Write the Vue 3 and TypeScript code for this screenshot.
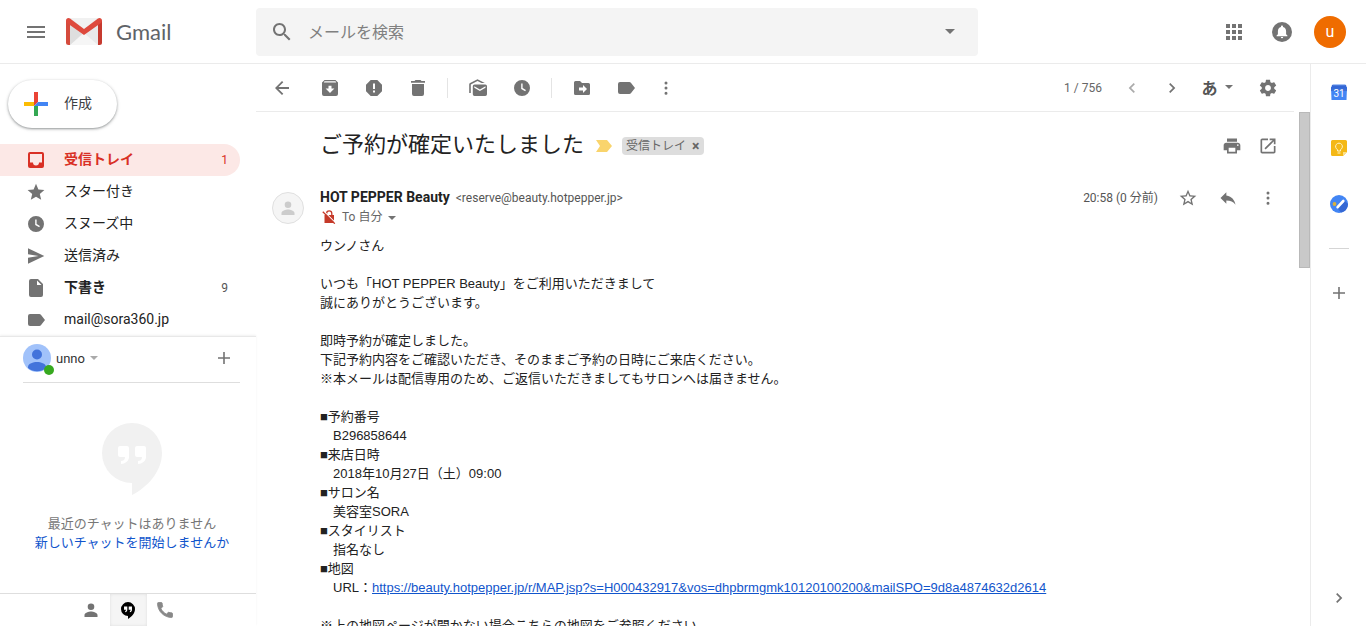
<script setup lang="ts">
import { ref } from 'vue'

interface Folder {
  id: string
  label: string
  icon: string
  count?: number
  bold?: boolean
}

const icons: Record<string, string> = {
  inbox: 'M4 2h12a2 2 0 0 1 2 2v12a2 2 0 0 1-2 2H4a2 2 0 0 1-2-2V4a2 2 0 0 1 2-2zM4 4v8.500h3a3 3 0 0 0 6 0h3V4z',
  star: 'M10 1.800l2.400 5.700 6 .5-4.600 3.900 1.400 5.900L10 14.700l-5.200 3.100 1.400-5.900L1.600 8l6-.5z',
  clock: 'M10 2a8 8 0 1 1 0 16 8 8 0 0 1 0-16zM9.200 5.500v5.400l4 2.400.7-1.200-3.300-2V5.500z',
  send: 'M2 2.300l16.300 7.700L2 17.700v-6L12.500 10 2 8.300z',
  file: 'M5 1h7l5 5v11a2 2 0 0 1-2 2H5a2 2 0 0 1-2-2V3a2 2 0 0 1 2-2zM11 2.500V7h4.500z',
  label: 'M4 4h9.300a2 2 0 0 1 1.600.8L19 10l-4.100 5.200a2 2 0 0 1-1.600.8H4a2 2 0 0 1-2-2V6a2 2 0 0 1 2-2z',
  back: 'M17 9.100H6.500l4.800-4.800L10 3l-7 7 7 7 1.300-1.300-4.800-4.800H17z',
  archive: 'M4.500 2h11L18 4.500V16a2 2 0 0 1-2 2H4a2 2 0 0 1-2-2V4.500zM4.500 3.300L3.800 4.500h12.400l-.7-1.200zM8.500 7.800v2.700H5.600L10 14.900l4.400-4.400h-2.900V7.800z',
  report: 'M6.700 2h6.600L18 6.700v6.600L13.300 18H6.700L2 13.300V6.700zM9 5.500V11h2V5.500zM9 12.500v2h2v-2z',
  trash: 'M7.500 2h5l1 1H17v1.800H3V3h3.500zM4 6h12v10a2 2 0 0 1-2 2H6a2 2 0 0 1-2-2z',
  unread: 'M6.500 6.500h10.800A1.700 1.700 0 0 1 19 8.200v8.100a1.700 1.700 0 0 1-1.700 1.700H6.500a1.700 1.700 0 0 1-1.700-1.700V8.200a1.700 1.700 0 0 1 1.700-1.700zM6.300 8.200v1.500l5.600 3.300 5.600-3.300V8.200l-5.600 3.200zM1.200 15V6.500c0-.7.3-1.200.9-1.500L9.500 1.300 16.800 5h-3.300l-4-2.100-6.700 3.500V15z',
  move: 'M3.500 3H8l2 2h6.500A1.500 1.500 0 0 1 18 6.500v9a1.500 1.500 0 0 1-1.500 1.500h-13A1.500 1.500 0 0 1 2 15.500v-11A1.500 1.500 0 0 1 3.500 3zM7 9.500v3h4V15l4-4-4-4v2.500z',
  more: 'M10 3.500a1.500 1.500 0 1 1 0 3 1.500 1.500 0 0 1 0-3zM10 8.600a1.500 1.500 0 1 1 0 3 1.500 1.500 0 0 1 0-3zM10 13.700a1.500 1.500 0 1 1 0 3 1.500 1.500 0 0 1 0-3z',
  prev: 'M11.700 5l1.200 1.200L9.100 10l3.800 3.800-1.200 1.200-5-5z',
  next: 'M8.300 5L7.100 6.200l3.800 3.800-3.800 3.800L8.300 15l5-5z',
  plus: 'M9.200 4h1.600v5.200H16v1.600h-5.200V16H9.200v-5.200H4V9.200h5.200z',
  person: 'M10 3.500a3.300 3.300 0 1 1 0 6.600 3.300 3.300 0 0 1 0-6.600zM3.500 17v-2c0-2.300 4.300-3.500 6.500-3.500s6.500 1.200 6.500 3.500v2z',
}

const icons24: Record<string, string> = {
  menu: 'M3 18h18v-2H3v2zm0-5h18v-2H3v2zm0-7v2h18V6H3z',
  search: 'M15.500 14h-.79l-.28-.27C15.410 12.590 16 11.110 16 9.500 16 5.910 13.090 3 9.500 3S3 5.910 3 9.500 5.910 16 9.500 16c1.610 0 3.090-.59 4.230-1.570l.27.28v.79l5 4.990L20.490 19l-4.990-5zm-6 0C7.010 14 5 11.990 5 9.500S7.010 5 9.500 5 14 7.010 14 9.500 11.990 14 9.500 14z',
  apps: 'M4 8h4V4H4v4zm6 12h4v-4h-4v4zm-6 0h4v-4H4v4zm0-6h4v-4H4v4zm6 0h4v-4h-4v4zm6-10v4h4V4h-4zm-6 4h4V4h-4v4zm6 6h4v-4h-4v4zm0 6h4v-4h-4v4z',
  gear: 'M19.430 12.980c.04-.32.07-.64.07-.98s-.03-.66-.07-.98l2.110-1.650c.19-.15.24-.42.12-.64l-2-3.460c-.12-.22-.39-.3-.61-.22l-2.490 1c-.52-.4-1.080-.73-1.690-.98l-.38-2.650C14.460 2.180 14.250 2 14 2h-4c-.25 0-.46.18-.49.42l-.38 2.650c-.61.25-1.170.59-1.690.98l-2.490-1c-.23-.09-.49 0-.61.22l-2 3.460c-.13.22-.07.49.12.64l2.110 1.650c-.04.32-.07.65-.07.98s.03.66.07.98l-2.110 1.650c-.19.15-.24.42-.12.64l2 3.460c.12.22.39.3.61.22l2.490-1c.52.4 1.080.73 1.690.98l.38 2.650c.03.24.24.42.49.42h4c.25 0 .46-.18.49-.42l.38-2.650c.61-.25 1.170-.59 1.690-.98l2.490 1c.23.09.49 0 .61-.22l2-3.460c.12-.22.07-.49-.12-.64l-2.110-1.650zM12 15.500c-1.930 0-3.500-1.570-3.500-3.500s1.570-3.500 3.500-3.500 3.500 1.570 3.500 3.500-1.570 3.500-3.500 3.500z',
  print: 'M19 8H5c-1.660 0-3 1.340-3 3v6h4v4h12v-4h4v-6c0-1.660-1.340-3-3-3zm-3 11H8v-5h8v5zm3-7c-.55 0-1-.45-1-1s.45-1 1-1 1 .45 1 1-.45 1-1 1zm-1-9H6v4h12V3z',
  open: 'M19 19H5V5h7V3H5c-1.110 0-2 .9-2 2v14c0 1.100.89 2 2 2h14c1.100 0 2-.9 2-2v-7h-2v7zM14 3v2h3.590l-9.830 9.830 1.410 1.410L19 6.410V10h2V3h-7z',
  starOutline: 'M22 9.240l-7.190-.62L12 2 9.190 8.630 2 9.240l5.460 4.730L5.820 21 12 17.270 18.180 21l-1.630-7.030L22 9.240zM12 15.400l-3.760 2.270 1-4.280-3.320-2.880 4.380-.38L12 6.100l1.710 4.040 4.380.38-3.320 2.880 1 4.280L12 15.400z',
  reply: 'M10 9V5l-7 7 7 7v-4.100c5 0 8.500 1.600 11 5.100-1-5-4-10-11-11z',
  phone: 'M20.010 15.380c-1.230 0-2.420-.2-3.530-.56-.35-.12-.74-.03-1.010.24l-1.570 1.970c-2.830-1.350-5.480-3.900-6.890-6.830l1.950-1.660c.27-.28.35-.67.24-1.020-.37-1.110-.56-2.300-.56-3.530 0-.54-.45-.99-.99-.99H4.190C3.650 3 3 3.240 3 3.990 3 13.280 10.730 21 20.010 21c.71 0 .99-.63.99-1.180v-3.450c0-.54-.45-.99-.99-.99z',
}

const folders: Folder[] = [
  { id: 'inbox', label: '受信トレイ', icon: 'inbox', count: 1, bold: true },
  { id: 'starred', label: 'スター付き', icon: 'star' },
  { id: 'snoozed', label: 'スヌーズ中', icon: 'clock' },
  { id: 'sent', label: '送信済み', icon: 'send' },
  { id: 'drafts', label: '下書き', icon: 'file', count: 9, bold: true },
  { id: 'label', label: 'mail@sora360.jp', icon: 'label' },
]

const toolGroups = [
  [
    { icon: 'archive', title: 'アーカイブ' },
    { icon: 'report', title: '迷惑メールを報告' },
    { icon: 'trash', title: '削除' },
  ],
  [
    { icon: 'unread', title: '未読にする' },
    { icon: 'clock', title: 'スヌーズ' },
  ],
  [
    { icon: 'move', title: '移動' },
    { icon: 'label', title: 'ラベル' },
  ],
]

const bodyTop = `ウンノさん

いつも「HOT PEPPER Beauty」をご利用いただきまして
誠にありがとうございます。

即時予約が確定しました。
下記予約内容をご確認いただき、そのままご予約の日時にご来店ください。
※本メールは配信専用のため、ご返信いただきましてもサロンへは届きません。
`

const details = [
  { term: '予約番号', value: 'B296858644' },
  { term: '来店日時', value: '2018年10月27日（土）09:00' },
  { term: 'サロン名', value: '美容室SORA' },
  { term: 'スタイリスト', value: '指名なし' },
]

const mapUrl =
  'https://beauty.hotpepper.jp/r/MAP.jsp?s=H000432917&vos=dhpbrmgmk10120100200&mailSPO=9d8a4874632d2614'

const active = ref('inbox')
const query = ref('')
</script>

<template>
  <div class="app">
    <header class="header">
      <div class="brand">
        <button class="icon-btn menu" aria-label="メインメニュー">
          <svg viewBox="0 0 24 24" class="i24"><path :d="icons24.menu" /></svg>
        </button>
        <a href="#" class="logo" aria-label="Gmail">
          <svg viewBox="0 0 36 27" class="logo-mark">
            <path d="M2 0h32v27H2z" fill="#e9e9e9" />
            <path d="M4 27l14-12 14 12z" fill="#f6f6f6" />
            <path d="M4 6v21l12-11z" fill="#dedede" />
            <path d="M4 0h28L18 11z" fill="#f1f1f1" />
            <path d="M0 2.500V24.500A2.500 2.500 0 0 0 2.500 27H4V5z" fill="#d54b3d" />
            <path d="M36 2.500V24.500A2.500 2.500 0 0 1 33.500 27H32V5z" fill="#c63a2f" />
            <path d="M0 2.500C0 .4 2.300-.6 4 .6L18 11 32 .6c1.700-1.200 4-.2 4 1.900 0 1.200-.5 2-1.400 2.700L18 17 1.400 5.200C.5 4.500 0 3.700 0 2.500z" fill="#de4a3d" />
          </svg>
          <span>Gmail</span>
        </a>
      </div>
      <form class="search" role="search" @submit.prevent>
        <button class="icon-btn search-go" type="submit" aria-label="検索">
          <svg viewBox="0 0 24 24" class="i24"><path :d="icons24.search" /></svg>
        </button>
        <input v-model="query" type="text" placeholder="メールを検索" aria-label="メールを検索" />
        <button class="icon-btn search-opt" type="button" aria-label="検索オプション"><i class="caret big"></i></button>
      </form>
      <div class="account">
        <button class="icon-btn" aria-label="Google アプリ">
          <svg viewBox="0 0 24 24" class="i24"><path :d="icons24.apps" /></svg>
        </button>
        <button class="icon-btn" aria-label="通知">
          <svg viewBox="0 0 20 20" class="i20">
            <circle cx="10" cy="10" r="10" />
            <path fill="#fff" d="M10 3.600c.6 0 1 .4 1 1v.5c2 .5 3.100 2 3.100 4.200v3l1.300 1.300v.7H4.600v-.7l1.300-1.300v-3c0-2.200 1.100-3.700 3.100-4.200v-.5c0-.6.4-1 1-1zM8.800 15h2.400a1.200 1.200 0 0 1-2.400 0z" />
          </svg>
        </button>
        <button class="icon-btn" aria-label="アカウント"><span class="avatar">u</span></button>
      </div>
    </header>

    <div class="columns">
      <aside class="sidebar">
        <button class="compose">
          <svg viewBox="0 0 24 24" class="i24">
            <path fill="#ea4335" d="M10 0h4v10l-4 4z" />
            <path fill="#4285f4" d="M14 10h10v4H10z" />
            <path fill="#34a853" d="M10 14h4v10h-4z" />
            <path fill="#fbbc04" d="M0 10h10v4H0z" />
          </svg>
          <span>作成</span>
        </button>
        <nav class="folders">
          <a
            v-for="f in folders"
            :key="f.id"
            href="#"
            class="folder"
            :class="{ active: active === f.id, bold: f.bold }"
            @click.prevent="active = f.id"
          >
            <svg viewBox="0 0 20 20" class="i20"><path fill-rule="evenodd" :d="icons[f.icon]" /></svg>
            <span class="name">{{ f.label }}</span>
            <span v-if="f.count" class="count">{{ f.count }}</span>
          </a>
        </nav>

        <section class="chat">
          <div class="chat-head">
            <button class="chat-user">
              <span class="chat-avatar">
                <svg viewBox="0 0 28 28">
                  <circle cx="14" cy="14" r="14" fill="#a1c2fa" />
                  <circle cx="14" cy="10.500" r="5" fill="#4273db" />
                  <path fill="#4273db" d="M5 24v-1.500C5.500 19.500 10 18 14 18s8.500 1.500 9 4.500V24a14 14 0 0 1-18 0z" />
                </svg>
                <i class="status"></i>
              </span>
              unno <i class="caret pale"></i>
            </button>
            <button class="icon-btn chat-add" aria-label="新しい会話">
              <svg viewBox="0 0 20 20" class="i20"><path :d="icons.plus" /></svg>
            </button>
          </div>
          <div class="chat-empty">
            <svg viewBox="0 0 60 72" class="hangouts">
              <path fill="#f1f1f1" d="M30 0a30 30 0 0 1 30 30c0 18-14 34-30 42V60a30 30 0 0 1 0-60z" />
              <path fill="#fff" d="M18 23h7a2 2 0 0 1 2 2v9c0 4-4 7-8 7v-3c2 0 4-1 4-4h-5a2 2 0 0 1-2-2v-7a2 2 0 0 1 2-2zM35 23h7a2 2 0 0 1 2 2v9c0 4-4 7-8 7v-3c2 0 4-1 4-4h-5a2 2 0 0 1-2-2v-7a2 2 0 0 1 2-2z" />
            </svg>
            <p>最近のチャットはありません</p>
            <a href="#">新しいチャットを開始しませんか</a>
          </div>
          <div class="chat-tabs">
            <button aria-label="連絡先"><svg viewBox="0 0 20 20" class="i20"><path :d="icons.person" /></svg></button>
            <button class="on" aria-label="ハングアウト">
              <svg viewBox="0 0 60 72" class="hang-small">
                <path d="M30 0a30 30 0 0 1 30 30c0 18-14 34-30 42V60a30 30 0 0 1 0-60z" />
                <path fill="#fff" d="M13 19h14v14c0 6-4 10-9 10v-5c2 0 4-2 4-5h-9zM33 19h14v14c0 6-4 10-9 10v-5c2 0 4-2 4-5h-9z" />
              </svg>
            </button>
            <button aria-label="電話"><svg viewBox="0 0 24 24" class="i20 phone"><path :d="icons24.phone" /></svg></button>
          </div>
        </section>
      </aside>

      <main class="main">
        <div class="toolbar" role="toolbar">
          <button class="icon-btn back" aria-label="受信トレイに戻る">
            <svg viewBox="0 0 20 20" class="i20"><path :d="icons.back" /></svg>
          </button>
          <template v-for="(group, gi) in toolGroups" :key="gi">
            <i v-if="gi > 0" class="sep"></i>
            <button v-for="t in group" :key="t.icon" class="icon-btn tool" :aria-label="t.title">
              <svg viewBox="0 0 20 20" class="i20"><path fill-rule="evenodd" :d="icons[t.icon]" /></svg>
            </button>
          </template>
          <button class="icon-btn more" aria-label="その他">
            <svg viewBox="0 0 20 20" class="i20"><path :d="icons.more" /></svg>
          </button>
          <span class="pager">1 / 756</span>
          <button class="icon-btn step off" aria-label="新しいメール">
            <svg viewBox="0 0 20 20" class="i20"><path :d="icons.prev" /></svg>
          </button>
          <button class="icon-btn step" aria-label="前のメール">
            <svg viewBox="0 0 20 20" class="i20"><path :d="icons.next" /></svg>
          </button>
          <button class="icon-btn lang" aria-label="入力ツール"><span>あ</span><i class="caret"></i></button>
          <button class="icon-btn back" aria-label="設定">
            <svg viewBox="0 0 24 24" class="i20"><path :d="icons24.gear" /></svg>
          </button>
        </div>

        <div class="reader">
          <article class="mail">
            <div class="subject">
              <h1>ご予約が確定いたしました</h1>
              <svg viewBox="0 0 16 12" class="marker"><path fill="#f9d46c" d="M0 0h11l5 6-5 6H0l4-6z" /></svg>
              <span class="chip">受信トレイ<button aria-label="ラベルを外す">×</button></span>
              <div class="actions">
                <button class="icon-btn" aria-label="印刷"><svg viewBox="0 0 24 24" class="i20"><path :d="icons24.print" /></svg></button>
                <button class="icon-btn" aria-label="新しいウィンドウ"><svg viewBox="0 0 24 24" class="i20"><path :d="icons24.open" /></svg></button>
              </div>
            </div>

            <div class="message">
              <span class="sender-avatar"><svg viewBox="0 0 20 20" class="i20"><path :d="icons.person" /></svg></span>
              <div class="content">
                <div class="from">
                  <strong>HOT PEPPER Beauty</strong>
                  <span class="address">&lt;reserve@beauty.hotpepper.jp&gt;</span>
                  <span class="time">20:58 (0 分前)</span>
                  <div class="actions">
                    <button class="icon-btn" aria-label="スターを付ける"><svg viewBox="0 0 24 24" class="i20"><path :d="icons24.starOutline" /></svg></button>
                    <button class="icon-btn" aria-label="返信"><svg viewBox="0 0 24 24" class="i20"><path :d="icons24.reply" /></svg></button>
                    <button class="icon-btn" aria-label="その他"><svg viewBox="0 0 20 20" class="i20"><path :d="icons.more" /></svg></button>
                  </div>
                </div>
                <button class="to">
                  <svg viewBox="0 0 14 14" class="lock">
                    <path fill="none" stroke="#c53929" stroke-width="1.300" d="M4.600 6V3.500a2.600 2.600 0 0 1 5.200 0V6" />
                    <path fill="#c53929" d="M2.500 5h9.500v8H2.500z" />
                    <path stroke="#fff" stroke-width="1.200" d="M1.500 .8l12 12" />
                    <path stroke="#c53929" stroke-width="1.300" d="M.8 1.700l12 12" />
                  </svg>
                  <span>To 自分</span> <i class="caret"></i>
                </button>
                <div class="text">
                  <p>{{ bodyTop }}</p>
                  <dl>
                    <template v-for="d in details" :key="d.term">
                      <dt>■{{ d.term }}</dt>
                      <dd>{{ d.value }}</dd>
                    </template>
                    <dt>■地図</dt>
                    <dd>URL：<a :href="mapUrl">{{ mapUrl }}</a></dd>
                  </dl>
                  <p>※上の地図ページが開かない場合こちらの地図をご参照ください</p>
                </div>
              </div>
            </div>
          </article>
          <div class="track"><div class="thumb"></div></div>
        </div>
      </main>

      <aside class="addons">
        <button aria-label="カレンダー">
          <svg viewBox="0 0 16 16">
            <path fill="#4285f4" d="M0 3h16l-.5 13H.5z" />
            <path fill="#3b6fd8" d="M0 4h16v3H0z" />
            <path fill="#3367d6" d="M1 1h14l1 3.500H0z" />
            <path fill="#a9c4f5" d="M1.500 0h13v1.200h-13z" />
            <text x="8" y="13" text-anchor="middle">31</text>
          </svg>
        </button>
        <button aria-label="Keep">
          <svg viewBox="0 0 16 16">
            <path fill="#f4b816" d="M1.500 0h13A1.500 1.500 0 0 1 16 1.500V12l-4 4H1.500A1.500 1.500 0 0 1 0 14.500v-13A1.500 1.500 0 0 1 1.500 0z" />
            <path fill="#fbe08a" d="M16 12l-4 4v-4z" />
            <path fill="none" stroke="#fff3c8" d="M6.500 11V9.600a3.400 3.400 0 1 1 3 0V11zM6.500 13h3" />
          </svg>
        </button>
        <button aria-label="ToDo リスト">
          <svg viewBox="0 0 18 18" class="tasks">
            <circle cx="9" cy="9" r="9" fill="#4285f4" />
            <path fill="#3568d4" d="M8 14l7-8 3 3a9 9 0 0 1-7 8.500z" />
            <circle cx="4.500" cy="9" r="1.900" fill="#d9b13c" />
            <path stroke="#fff" stroke-width="2.600" stroke-linecap="round" d="M7.600 12.200L13.300 6" />
          </svg>
        </button>
        <i class="rule"></i>
        <button aria-label="アドオンを取得"><svg viewBox="0 0 20 20" class="i20"><path :d="icons.plus" /></svg></button>
        <button class="collapse" aria-label="サイドパネルを閉じる"><svg viewBox="0 0 20 20" class="i20"><path :d="icons.next" /></svg></button>
      </aside>
    </div>
  </div>
</template>

<style>
body {
  margin: 0;
  background: #fff;
}
</style>

<style scoped>
.app {
  display: flex;
  flex-direction: column;
  height: 100vh;
  overflow: hidden;
  font-family: Roboto, 'Noto Sans CJK JP', sans-serif;
  font-size: 14px;
  color: #222;
}
.app *,
.app {
  box-sizing: border-box;
}
button {
  border: 0;
  padding: 0;
  background: none;
  font: inherit;
  color: inherit;
  cursor: pointer;
}
a {
  text-decoration: none;
  color: inherit;
}
svg {
  display: block;
  flex: none;
}
svg,
.icon-btn {
  fill: #737373;
}
.i20 {
  width: 20px;
  height: 20px;
}
.i24 {
  width: 24px;
  height: 24px;
}
.icon-btn {
  display: flex;
  align-items: center;
  justify-content: center;
  flex: none;
}
.caret {
  flex: none;
  border: 4px solid transparent;
  border-top-color: #737373;
  border-bottom: 0;
}
.caret.big {
  border-width: 5px;
  border-bottom: 0;
}
.caret.pale {
  border-top-color: #aaa;
}

/* header */
.header {
  display: flex;
  align-items: center;
  height: 64px;
  flex: none;
  border-bottom: 1px solid #ebebeb;
}
.brand {
  display: flex;
  align-items: center;
  width: 256px;
  flex: none;
  padding-left: 24px;
}
.logo {
  display: flex;
  align-items: center;
  gap: 14px;
  margin-left: 18px;
  font: 22px/32px Lato, sans-serif;
  color: #5f6368;
}
.logo-mark {
  width: 36px;
  height: 27px;
}
.search {
  display: flex;
  align-items: center;
  flex: 0 1 722px;
  height: 48px;
  border-radius: 4px;
  background: #f4f4f4;
}
.search-go {
  width: 52px;
  height: 48px;
}
.search input {
  flex: 1;
  min-width: 0;
  border: 0;
  outline: 0;
  padding: 2px 0 0;
  background: none;
  font: 16px/24px Roboto, 'Noto Sans CJK JP', sans-serif;
}
.search input::placeholder {
  color: #808080;
  opacity: 1;
}
.search-opt {
  width: 56px;
  height: 48px;
}
.account {
  display: flex;
  margin-left: auto;
  padding-right: 12px;
}
.account .icon-btn {
  width: 48px;
  height: 48px;
}
.avatar {
  width: 32px;
  border-radius: 50%;
  background: #ef6c00;
  color: #fff;
  font-size: 16px;
  line-height: 32px;
}

.columns {
  display: flex;
  flex: 1;
  min-height: 0;
}

/* sidebar */
.sidebar {
  display: flex;
  flex-direction: column;
  width: 256px;
  flex: none;
}
.compose {
  display: flex;
  align-items: center;
  align-self: flex-start;
  gap: 16px;
  height: 48px;
  margin: 16px 8px;
  padding: 0 25px 0 16px;
  border-radius: 24px;
  background: #fff;
  box-shadow: 0 1px 2px rgba(60, 64, 67, 0.4), 0 1px 3px 1px rgba(60, 64, 67, 0.15);
  color: #3c4043;
}
.compose span {
  padding-bottom: 4px;
}
.folder {
  display: flex;
  align-items: center;
  height: 32px;
  margin-right: 16px;
  padding: 0 12px 0 26px;
  border-radius: 0 16px 16px 0;
  line-height: 20px;
}
.folder .name {
  flex: 1;
  margin-left: 18px;
  padding-bottom: 2px;
}
.folder.bold .name {
  font-weight: 700;
}
.folder .count {
  font-size: 12px;
  color: #555;
}
.folder.active {
  background: #fce8e6;
  color: #d93025;
}
.folder.active .count {
  color: #d93025;
}
.folder.active svg {
  fill: #d93025;
}
.chat {
  display: flex;
  flex-direction: column;
  flex: 1;
  min-height: 0;
  border-top: 1px solid #e8e8e8;
  box-shadow: 0 -1px 2px rgba(0, 0, 0, 0.06);
  font-size: 13px;
}
.chat-head {
  display: flex;
  align-items: center;
  justify-content: space-between;
  height: 46px;
  margin: 0 16px 0 23px;
  padding-bottom: 3px;
  border-bottom: 1px solid #dedede;
}
.chat-user {
  display: flex;
  align-items: center;
  gap: 5px;
  height: 40px;
  color: #333;
}
.chat-avatar {
  position: relative;
}
.chat-avatar svg {
  width: 28px;
  height: 28px;
}
.status {
  position: absolute;
  right: -3px;
  bottom: -3px;
  width: 10px;
  height: 10px;
  border-radius: 50%;
  background: #37a91f;
}
.chat-add {
  width: 32px;
  height: 32px;
}
.chat-empty {
  display: flex;
  flex-direction: column;
  align-items: center;
  flex: 1;
  padding: 40px 0 0 8px;
  line-height: 19px;
  color: #777;
}
.hangouts {
  width: 60px;
  height: 72px;
}
.chat-empty p {
  margin: 19px 0 0;
}
.chat-empty a {
  color: #15c;
}
.chat-tabs {
  display: flex;
  justify-content: center;
  height: 33px;
  border-top: 1px solid #dedede;
}
.chat-tabs button {
  display: flex;
  align-items: center;
  justify-content: center;
  width: 37px;
}
.chat-tabs .on {
  background: #f5f5f5;
  box-shadow: inset 0 0 3px #ddd;
}
.hang-small {
  width: 14px;
  height: 17px;
  fill: #000;
}
.phone {
  fill: #888;
  stroke: #888;
}

/* toolbar */
.main {
  display: flex;
  flex-direction: column;
  flex: 1;
  min-width: 0;
}
.toolbar {
  display: flex;
  align-items: center;
  height: 48px;
  flex: none;
  margin-right: 16px;
  border-bottom: 1px solid #ebebeb;
}
.toolbar .icon-btn {
  height: 40px;
}
.back {
  width: 52px;
}
.tool {
  width: 44px;
}
.more {
  width: 36px;
}
.step {
  width: 40px;
}
.off {
  opacity: 0.6;
}
.sep {
  width: 1px;
  height: 20px;
  margin: 0 8px 0 7px;
  background: #e4e4e4;
}
.pager {
  margin-left: auto;
  padding-right: 10px;
  font-size: 12px;
  color: #666;
}
.lang {
  gap: 7px;
  width: 50px;
  font-size: 16px;
  font-weight: 700;
  color: #555;
}
.lang span {
  padding-bottom: 2px;
}
.lang .caret {
  margin-bottom: 2px;
}

/* message */
.reader {
  display: flex;
  flex: 1;
  min-height: 0;
}
.mail {
  flex: 1;
  min-width: 0;
  overflow: hidden;
  padding: 16px 11px 0 16px;
}
.track {
  width: 11px;
  flex: none;
}
.thumb {
  height: 156px;
  background: #c9c9c9;
  border: 1px solid #b9b9b9;
}
.subject {
  display: flex;
  align-items: center;
  height: 36px;
  padding-left: 48px;
}
h1 {
  margin: 0;
  padding-bottom: 3px;
  font-size: 22px;
  font-weight: 400;
  line-height: 32px;
  white-space: nowrap;
}
.marker {
  width: 16px;
  height: 12px;
  margin: 0 10px 0 12px;
}
.chip {
  display: flex;
  align-items: center;
  gap: 6px;
  height: 18px;
  padding: 0 5px 0 4px;
  border-radius: 4px;
  background: #ddd;
  color: #666;
  font-size: 12px;
  line-height: 18px;
  white-space: nowrap;
}
.chip button {
  font-size: 14px;
  font-weight: 700;
}
.actions {
  display: flex;
  margin-left: auto;
}
.actions .icon-btn {
  width: 36px;
  height: 20px;
}
.subject .actions {
  padding-right: 2px;
}
.message {
  display: flex;
  gap: 16px;
  padding-top: 24px;
}
.sender-avatar {
  display: flex;
  align-items: center;
  justify-content: center;
  width: 32px;
  height: 32px;
  flex: none;
  margin-top: 4px;
  border: 1px solid #e0e0e0;
  border-radius: 50%;
  background: #f5f5f5;
}
.sender-avatar svg {
  fill: #ccc;
}
.content {
  flex: 1;
  min-width: 0;
}
.from {
  display: flex;
  align-items: center;
  gap: 6px;
  height: 20px;
  line-height: 20px;
  white-space: nowrap;
}
.from strong {
  padding-bottom: 2px;
}
.address,
.time {
  padding-bottom: 1px;
  font-size: 12px;
  color: #555;
}
.time {
  margin-left: auto;
}
.from .actions {
  margin-left: 4px;
}
.from .actions .icon-btn {
  width: 40px;
}
.to {
  display: flex;
  align-items: center;
  gap: 6px;
  height: 20px;
  padding: 0 0 2px 2px;
  font-size: 12px;
  line-height: 18px;
  color: #666;
}
.to .caret {
  margin-top: 2px;
}
.lock {
  width: 14px;
  height: 14px;
}
.text {
  margin-top: 8px;
  font: 13px/19px 'Liberation Sans', 'Noto Sans CJK JP', sans-serif;
}
.text p {
  margin: 0;
  white-space: pre-wrap;
}
dl {
  margin: 19px 0;
}
dd {
  margin: 0;
  padding-left: 13px;
}
dd a {
  color: #15c;
  text-decoration: underline;
}

/* add-on panel */
.addons {
  display: flex;
  flex-direction: column;
  align-items: center;
  width: 56px;
  flex: none;
  border-left: 1px solid #ebebeb;
}
.addons button {
  display: flex;
  align-items: center;
  justify-content: center;
  width: 55px;
  height: 56px;
}
.addons svg {
  width: 16px;
  height: 16px;
}
.addons svg.i20 {
  width: 20px;
  height: 20px;
}
.addons svg.tasks {
  width: 18px;
  height: 18px;
}
.addons text {
  fill: #fff;
  font-size: 10px;
}
.rule {
  width: 20px;
  height: 1px;
  margin: 16px 0;
  background: #d5d5d5;
}
.addons .collapse {
  margin-top: auto;
}
</style>
